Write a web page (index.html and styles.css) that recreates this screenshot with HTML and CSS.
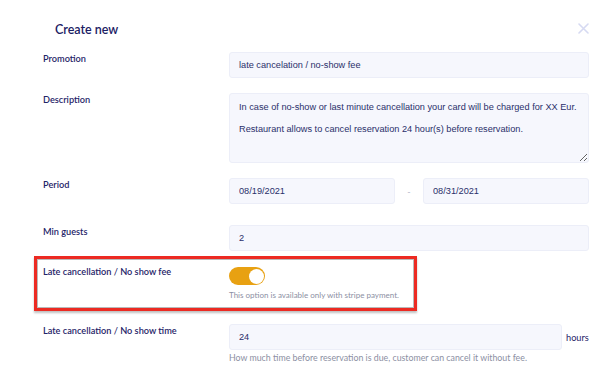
FILE: index.html
```html
<!DOCTYPE html>
<html>
  <head>
    <title>Create new</title>
    <link rel="stylesheet" href="styles.css">
  </head>
  <body>
    <div class="modal">
      <div class="modal-header">
        <h2>Create new</h2>
        <svg class="close" width="11" height="11" viewBox="0 0 11 11">
          <path d="M1 1 L10 10 M10 1 L1 10" stroke="#d6daf2" stroke-width="1.6" stroke-linecap="round" />
        </svg>
      </div>

      <div class="form">
        <div class="form-row row-promotion">
          <label>Promotion</label>
          <div class="control">
            <input type="text" class="field" value="late cancelation / no-show fee" />
          </div>
        </div>

        <div class="form-row row-description">
          <label>Description</label>
          <div class="control">
            <textarea class="field area">In case of no-show or last minute cancellation your card will be charged for XX Eur.

Restaurant allows to cancel reservation 24 hour(s) before reservation.</textarea>
          </div>
        </div>

        <div class="form-row row-period">
          <label>Period</label>
          <div class="control period">
            <input type="text" class="field date" value="08/19/2021" />
            <span class="dash">-</span>
            <input type="text" class="field date" value="08/31/2021" />
          </div>
        </div>

        <div class="form-row row-guests">
          <label>Min guests</label>
          <div class="control">
            <input type="text" class="field" value="2" />
          </div>
        </div>

        <div class="form-row row-fee">
          <div class="highlight"></div>
          <label>Late cancellation / No show fee</label>
          <div class="control">
            <span class="toggle"><span class="knob"></span></span>
            <div class="hint">This option is available only with stripe payment.</div>
          </div>
        </div>

        <div class="form-row row-time">
          <label>Late cancellation / No show time</label>
          <div class="control">
            <div class="with-unit">
              <input type="text" class="field" value="24" />
              <span class="unit">hours</span>
            </div>
            <div class="hint hint-wide">How much time before reservation is due, customer can cancel it without fee.</div>
          </div>
        </div>
      </div>
    </div>
  </body>
</html>
```

FILE: styles.css
```css
body {
  margin: 0;
  background-color: #fff;
  font-family: "Lato", "Liberation Sans", sans-serif;
  color: #1f2468;
}
.modal {
  width: 614px;
  height: 371px;
  overflow: hidden;
}
.modal-header {
  display: flex;
  justify-content: space-between;
  align-items: center;
  padding: 17px 25px 0 55px;
  height: 24px;
}
.modal-header h2 {
  margin: 0;
  font-size: 12.5px;
  font-weight: 600;
  color: #1b2063;
}
.close {
  display: block;
  margin-top: -1px;
}
.form {
  padding: 11px 25px 0 43px;
}
.form-row {
  display: flex;
  position: relative;
}
.form-row label {
  width: 186px;
  flex-shrink: 0;
  font-size: 9.2px;
  font-weight: 600;
  color: #1f2468;
  line-height: 14px;
}
.control {
  flex: 1;
}
.field {
  display: block;
  box-sizing: border-box;
  width: 100%;
  height: 26px;
  padding: 0 9px;
  border: 1px solid #eceef8;
  border-radius: 3px;
  background-color: #f6f7fd;
  font-family: "Liberation Sans", sans-serif;
  font-size: 9.2px;
  color: #2a2f6a;
  outline: none;
}
.area {
  height: 70px;
  padding: 8px 9px;
  line-height: 11px;
  resize: vertical;
}
.row-promotion {
  margin-bottom: 15px;
}
.row-description {
  margin-bottom: 15px;
}
.row-period {
  margin-bottom: 21px;
}
.period {
  display: flex;
  align-items: center;
}
.period .date {
  width: 166px;
}
.dash {
  flex: 1;
  text-align: center;
  font-size: 9px;
  color: #b6b9cc;
}
.row-guests {
  margin-bottom: 14px;
}
.row-fee {
  margin-bottom: 24px;
}
.row-fee .control {
  padding-top: 2px;
}
.toggle {
  display: block;
  position: relative;
  width: 36px;
  height: 18px;
  border-radius: 9px;
  background-color: #e8a112;
}
.knob {
  position: absolute;
  top: 1.5px;
  right: 1.5px;
  width: 15px;
  height: 15px;
  border-radius: 50%;
  background-color: #fff;
}
.hint {
  margin-top: 5px;
  font-size: 8px;
  color: #8c8fa3;
  line-height: 10px;
}
.hint-wide {
  margin-top: 3px;
  font-size: 8.8px;
}
.highlight {
  position: absolute;
  left: -9px;
  top: -9px;
  width: 383px;
  height: 55px;
  box-sizing: border-box;
  border: 3px solid #ec2a22;
  box-shadow: inset 0 0 0 1px #b9b9b9, 0 2px 2px rgba(0, 0, 0, 0.25);
}
.with-unit {
  display: flex;
  align-items: center;
}
.with-unit .field {
  width: 333px;
}
.unit {
  margin-left: 4px;
  font-size: 9.2px;
  color: #1f2468;
}
```
